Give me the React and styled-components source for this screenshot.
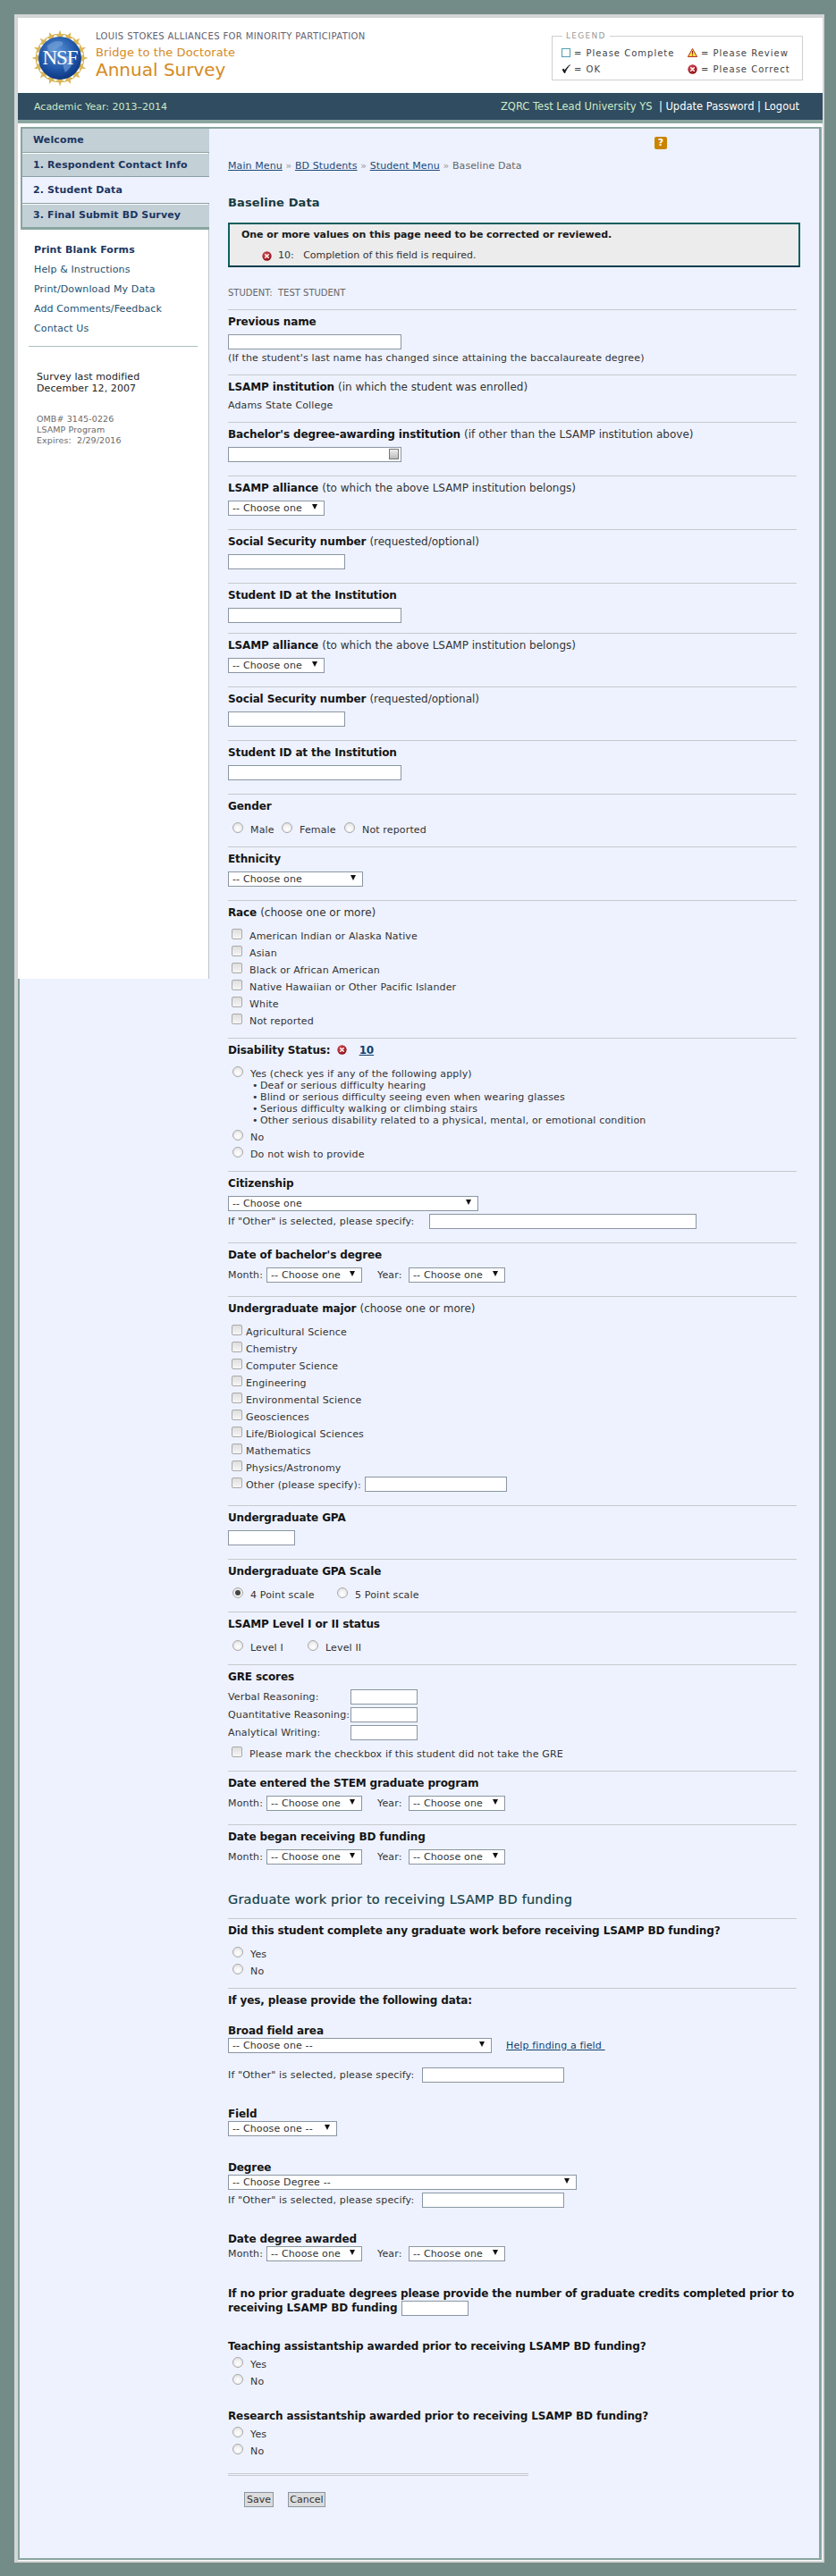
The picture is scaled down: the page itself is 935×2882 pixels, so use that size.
import React from 'react';
import styled, { createGlobalStyle } from 'styled-components';

const GlobalStyle = createGlobalStyle`
  html, body { margin: 0; padding: 0; background: #748c88; }
  body { font-family: "DejaVu Sans", Verdana, sans-serif; font-size: 11px; color: #222; }
`;

const Page = styled.div`
  width: 935px;
  height: 2882px;
  padding-top: 16px;
  box-sizing: border-box;
`;
const Wrapper = styled.div`
  width: 906px;
  height: 2851px;
  margin-left: 16px;
  box-sizing: border-box;
  background: #fff;
  border: 4px solid #d4d6d6;
  border-right-width: 2px;
  border-bottom-width: 2px;
`;

/* header */
const Header = styled.div`
  height: 84px;
  position: relative;
  display: flex;
`;
const Logo = styled.svg`
  width: 68px;
  height: 64px;
  margin: 13px 0 0 13px;
`;
const Titles = styled.div`
  margin: 14px 0 0 6px;
  width: 500px;
`;
const Over = styled.div`
  font-size: 10px;
  line-height: 14px;
  color: #5f6172;
  letter-spacing: 0.38px;
`;
const Sub = styled.div`
  font-size: 13px;
  line-height: 18px;
  margin-top: 2px;
  color: #d58a22;
  letter-spacing: 0.1px;
`;
const Big = styled.div`
  font-size: 20px;
  line-height: 22px;
  margin-top: -1px;
  color: #d58a22;
`;
const Legend = styled.fieldset`
  position: absolute;
  left: 597px;
  top: 16px;
  width: 281px;
  height: 54px;
  box-sizing: border-box;
  margin: 0;
  padding: 5px 0 0 10px;
  border: 1px solid #cfcfcf;
  display: grid;
  grid-template-columns: 141px 1fr;
  grid-auto-rows: 18px;
  align-items: center;
  font-size: 10px;
  letter-spacing: 1px;
  color: #444;
  & > legend {
    padding: 0 4px;
    margin-left: 1px;
    font-size: 9px;
    line-height: 9px;
    color: #999;
    letter-spacing: 1.3px;
  }
`;
const LegendItem = styled.div`
  display: flex;
  align-items: center;
  gap: 4px;
  white-space: nowrap;
`;
const LegendBox = styled.span`
  width: 8px;
  height: 8px;
  border: 1px solid #4f9fb3;
  background: #fff;
`;

const TopBar = styled.div`
  height: 34px;
  box-sizing: border-box;
  background: #304c60;
  border-bottom: 4px solid #8aa5a0;
  display: flex;
  justify-content: space-between;
  align-items: center;
  padding: 0 26px 0 18px;
  font-size: 11px;
  color: #cdeac8;
`;
const BarLinks = styled.div`
  white-space: pre;
  font-size: 11.5px;
  & b { font-weight: 400; color: #fff; }
`;

/* panel */
const Panel = styled.div`
  margin: 4px 1px 0 0;
  height: 2722px;
  box-sizing: border-box;
  background: #eef2fe;
  border: 2px solid #8aa5a0;
  border-right-width: 3px;
  display: flex;
  align-items: flex-start;
  position: relative;
`;
const Sidebar = styled.div`
  width: 214px;
  height: 953px;
  margin: -2px 0 0 -2px;
  padding-left: 5px;
  box-sizing: border-box;
  flex: none;
  background: #fff;
  border-right: 1px solid #b8c6c6;
  position: relative;
`;
const Nav = styled.div`
  margin: 0 -1px 0 -2px;
  border-top: 2px solid #8aa5a0;
  border-left: 2px solid #8aa5a0;
  border-bottom: 3px solid #8aa5a0;
`;
const NavItem = styled.div`
  height: ${(p) => p.$h}px;
  line-height: ${(p) => p.$h - 1}px;
  box-sizing: border-box;
  padding-left: 12px;
  background: ${(p) => (p.$active ? '#eef2fe' : '#c3d0d6')};
  border-bottom: 1px solid #8a9ea0;
  margin-bottom: ${(p) => p.$gap || 0}px;
  font-size: 11px;
  font-weight: 700;
  color: #1c3560;
  letter-spacing: 0.12px;
  &:last-child { border-bottom: 0; }
`;
const Links = styled.div`
  padding: 12px 0 0 13px;
`;
const SideLink = styled.div`
  height: 22px;
  line-height: 22px;
  font-size: 11px;
  letter-spacing: 0.12px;
  color: ${(p) => (p.$bold ? '#1c3560' : '#23506f')};
  font-weight: ${(p) => (p.$bold ? 700 : 400)};
`;
const SideRule = styled.div`
  height: 1px;
  margin: 8px 12px 0 7px;
  background: #a9bfbf;
`;
const Modified = styled.div`
  padding: 27px 0 0 16px;
  line-height: 13px;
  font-size: 11px;
  color: #222;
  letter-spacing: 0.1px;
`;
const Omb = styled.div`
  padding: 22px 0 0 16px;
  line-height: 12px;
  font-size: 9.5px;
  color: #6a6a6a;
  letter-spacing: 0.1px;
`;

/* content */
const Main = styled.div`
  width: 640px;
  margin-left: 21px;
  position: relative;
`;
const HelpIcon = styled.div`
  position: absolute;
  left: 477px;
  top: 9px;
  width: 14px;
  height: 14px;
  border-radius: 2px;
  background: #c98400;
  color: #fff;
  font-size: 11px;
  font-weight: 700;
  line-height: 14px;
  text-align: center;
`;
const Crumbs = styled.div`
  padding-top: 34px;
  line-height: 16px;
  color: #666;
  white-space: pre;
  letter-spacing: 0.1px;
  & a { color: #1d4a78; text-decoration: underline; }
  & span { color: #999; }
`;
const PageTitle = styled.h1`
  margin: 24px 0 0;
  font-size: 13px;
  line-height: 18px;
  font-weight: 700;
  color: #173c40;
  letter-spacing: 0.1px;
`;
const Alert = styled.div`
  margin-top: 13px;
  width: 640px;
  height: 50px;
  box-sizing: border-box;
  background: #ececec;
  border: 2px solid #0f5f5f;
  border-bottom-color: #0b3d4d;
  padding: 5px 0 0 13px;
`;
const AlertHead = styled.div`
  font-weight: 700;
  line-height: 14px;
  color: #1a1a1a;
  letter-spacing: -0.05px;
`;
const AlertLine = styled.div`
  margin: 9px 0 0 23px;
  line-height: 14px;
  display: flex;
  align-items: center;
  color: #333;
  white-space: pre;
`;
const Student = styled.div`
  margin-top: 22px;
  font-size: 10px;
  line-height: 14px;
  color: #666;
`;
const Section = styled.div`
  display: flow-root;
  width: 636px;
  height: ${(p) => p.$h}px;
  box-sizing: border-box;
  border-top: ${(p) => (p.$plain ? 0 : '1px solid #c6cacc')};
  padding-top: ${(p) => (p.$plain ? 0 : 5)}px;
  margin-top: ${(p) => p.$mt || 0}px;
`;
const Label = styled.div`
  height: ${(p) => p.$lines * 16 || 16}px;
  font-size: 12px;
  font-weight: 700;
  line-height: 16px;
  color: #151515;
  letter-spacing: -0.12px;
  white-space: nowrap;
  margin-top: ${(p) => p.$mt || 0}px;
  & span { font-weight: 400; color: #333; letter-spacing: 0; }
  & a { color: #123f6b; text-decoration: underline; margin-left: 10px; }
  & svg { margin-left: 3px; vertical-align: -1px; }
`;
const Input = styled.span`
  display: inline-block;
  width: ${(p) => p.$w}px;
  height: 17px;
  box-sizing: border-box;
  background: #fff;
  border: 1px solid #8a96a3;
  vertical-align: middle;
  margin-left: ${(p) => p.$ml || 0}px;
  margin-top: ${(p) => p.$mt || 0}px;
  position: relative;
`;
const Select = styled.span`
  display: inline-flex;
  align-items: center;
  justify-content: space-between;
  width: ${(p) => p.$w}px;
  height: 17px;
  box-sizing: border-box;
  background: #fff;
  border: 1px solid #8a96a3;
  padding: 0 7px 0 4px;
  font-size: 11px;
  letter-spacing: 0.15px;
  color: #333;
  &::after {
    content: '';
    border-left: 3px solid transparent;
    border-right: 3px solid transparent;
    border-top: 6px solid #111;
    margin-top: -3px;
  }
`;
const Control = styled.div`
  margin-top: ${(p) => (p.$mt === undefined ? 6 : p.$mt)}px;
  height: 17px;
  display: flex;
  align-items: center;
  white-space: pre;
  color: #333;
`;
const Text = styled.div`
  line-height: 14px;
  letter-spacing: 0.15px;
  color: #333;
  margin-top: ${(p) => p.$mt || 0}px;
`;
const FieldLabel = styled.span`
  flex: none;
  width: ${(p) => p.$w}px;
  margin-left: ${(p) => p.$ml || 0}px;
  letter-spacing: 0.15px;
  color: #333;
`;
const HelpLink = styled.a`
  margin-left: 16px;
  letter-spacing: 0.15px;
  color: #123f6b;
  text-decoration: underline;
`;
const Option = styled.div`
  height: 19px;
  display: flex;
  align-items: center;
  color: #333;
  letter-spacing: 0.15px;
  white-space: pre;
  padding-left: 4px;
  box-sizing: border-box;
  width: ${(p) => (p.$w ? `${p.$w}px` : 'auto')};
`;
const OptionText = styled.span`
  padding-top: 5px;
`;
const Options = styled.div`
  margin-top: 6px;
`;
const Row = styled.div`
  display: flex;
  margin-top: 6px;
`;
const RadioMark = styled.span`
  flex: none;
  width: 12px;
  height: 12px;
  box-sizing: border-box;
  border-radius: 50%;
  border: 1px solid #a9a9a9;
  background: radial-gradient(circle at 50% 65%, #fff 0%, #f2f2f2 45%, #d8d8d8 100%);
  margin: 0 8px 0 1px;
  position: relative;
  &::after {
    content: ${(p) => (p.$on ? "''" : 'none')};
    position: absolute;
    left: 2px;
    top: 2px;
    width: 6px;
    height: 6px;
    border-radius: 50%;
    background: #444;
  }
`;
const CheckMark = styled.span`
  flex: none;
  width: 12px;
  height: 12px;
  box-sizing: border-box;
  border-radius: 2px;
  border: 1px solid #a9a9a9;
  background: linear-gradient(#dedede, #f6f6f6);
  margin-right: ${(p) => p.$mr ?? 8}px;
`;
const Bullets = styled.ul`
  margin: 0;
  padding: 0 0 0 36px;
  list-style: none;
  & li { height: 13px; line-height: 13px; letter-spacing: 0.15px; color: #333; }
  & li::before { content: '•'; display: inline-block; width: 9px; margin-left: -9px; }
`;
const GreRow = styled.div`
  height: 17px;
  margin-bottom: 3px;
  display: flex;
  align-items: center;
  color: #333;
  letter-spacing: 0.15px;
  white-space: nowrap;
`;
const GreName = styled.span`
  width: 137px;
  flex: none;
`;
const Heading2 = styled.h2`
  margin: 25px 0 0;
  font-size: 14.5px;
  line-height: 18px;
  font-weight: 400;
  letter-spacing: 0.2px;
  color: #123f45;
  -webkit-text-stroke: 0.2px #123f45;
`;
const DoubleRule = styled.div`
  width: 336px;
  height: 3px;
  box-sizing: border-box;
  border-top: 1px solid #c6cacc;
  border-bottom: 1px solid #c6cacc;
  margin-top: 15px;
`;
const Buttons = styled.div`
  display: flex;
  gap: 16px;
  margin: 18px 0 0 18px;
`;
const Button = styled.button`
  width: ${(p) => p.$w}px;
  height: 17px;
  padding: 0;
  background: #dcdcdc;
  border: 1px solid #8a96a3;
  font-family: inherit;
  font-size: 11px;
  color: #333;
`;
const AddressIcon = styled.span`
  position: absolute;
  right: 2px;
  top: 1px;
  width: 11px;
  height: 12px;
  box-sizing: border-box;
  border: 1px solid #777;
  background: linear-gradient(#eee, #bbb);
`;

const Radio = ({ children, on, w }) => (
  <Option $w={w}>
    <RadioMark $on={on} />
    <OptionText>{children}</OptionText>
  </Option>
);
const Check = ({ children, mr }) => (
  <Option>
    <CheckMark $mr={mr} />
    <OptionText>{children}</OptionText>
  </Option>
);

const ErrorIcon = ({ size = 11 }) => (
  <svg width={size} height={size} viewBox="0 0 12 12">
    <defs>
      <radialGradient id="err" cx="40%" cy="35%" r="70%">
        <stop offset="0" stopColor="#e0505a" />
        <stop offset="1" stopColor="#8a0d14" />
      </radialGradient>
    </defs>
    <circle cx="6" cy="6" r="5.6" fill="url(#err)" />
    <path d="M4 4l4 4M8 4l-4 4" stroke="#fff" strokeWidth="1.5" strokeLinecap="round" />
  </svg>
);

const NsfLogo = () => {
  const stars = Array.from({ length: 16 }, (_, i) => (i * 360) / 16);
  return (
    <Logo viewBox="0 0 68 64">
      <defs>
        <radialGradient id="globe" cx="45%" cy="35%" r="70%">
          <stop offset="0" stopColor="#5c95d8" />
          <stop offset="0.6" stopColor="#1f56a8" />
          <stop offset="1" stopColor="#0b2f78" />
        </radialGradient>
      </defs>
      {stars.map((a) => (
        <g key={a} transform={`rotate(${a} 34 32)`}>
          <path d="M34 0.5l1.6 4.4 4.4.2-3.5 2.6 1.3 4.3-3.8-2.6-3.8 2.6 1.3-4.3-3.5-2.6 4.4-.2z" fill="#d9b658" />
        </g>
      ))}
      <circle cx="34" cy="32" r="24" fill="url(#globe)" />
      <path d="M20 18c6-5 12-6 17-4 2 2-2 5-5 6-2 3-5 3-7 6-3 0-5-2-5-8zM38 30c5-1 10 1 11 5-1 5-6 11-9 13-2-5-4-12-2-18z" fill="#7fa9dc" opacity="0.55" />
      <text x="34" y="39" textAnchor="middle" fontFamily='"Liberation Serif", serif' fontSize="23" fill="#fff" letterSpacing="-1">NSF</text>
    </Logo>
  );
};

const DateRow = ({ mt }) => (
  <Control $mt={mt}>
    <FieldLabel $w={43}>Month:</FieldLabel>
    <Select $w={107}>-- Choose one</Select>
    <FieldLabel $w={35} $ml={17}>Year:</FieldLabel>
    <Select $w={108}>-- Choose one</Select>
  </Control>
);

const races = ['American Indian or Alaska Native', 'Asian', 'Black or African American', 'Native Hawaiian or Other Pacific Islander', 'White', 'Not reported'];
const majors = ['Agricultural Science', 'Chemistry', 'Computer Science', 'Engineering', 'Environmental Science', 'Geosciences', 'Life/Biological Sciences', 'Mathematics', 'Physics/Astronomy'];

export default function App() {
  return (
    <Page>
      <GlobalStyle />
      <Wrapper>
        <Header>
          <NsfLogo />
          <Titles>
            <Over>LOUIS STOKES ALLIANCES FOR MINORITY PARTICIPATION</Over>
            <Sub>Bridge to the Doctorate</Sub>
            <Big>Annual Survey</Big>
          </Titles>
          <Legend>
            <legend>LEGEND</legend>
            <LegendItem><LegendBox /> = Please Complete</LegendItem>
            <LegendItem>
              <svg width="11" height="10" viewBox="0 0 11 10"><path d="M5.5 0.5L10.700 9.500H0.300z" fill="#f4dc3a" stroke="#b8322a" strokeWidth="1" /><path d="M5.500 3v3.500M5.500 7.500v1" stroke="#8a1a14" /></svg>
              = Please Review
            </LegendItem>
            <LegendItem>
              <svg width="10" height="11" viewBox="0 0 10 11"><path d="M1 6l2.600 4C5 6.500 7 3 9.600 0.600 6.800 2.500 4.800 4.800 3.600 7L2.400 5z" fill="#111" stroke="#111" strokeWidth="0.7" /></svg>
              = OK
            </LegendItem>
            <LegendItem><ErrorIcon /> = Please Correct</LegendItem>
          </Legend>
        </Header>
        <TopBar>
          <div>Academic Year: 2013–2014</div>
          <BarLinks>ZQRC Test Lead University YS  <b>| Update Password | Logout</b></BarLinks>
        </TopBar>
        <Panel>
          <Sidebar>
            <Nav>
              <NavItem $h={27} $gap={1}>Welcome</NavItem>
              <NavItem $h={26}>1. Respondent Contact Info</NavItem>
              <NavItem $h={30} $gap={1} $active>2. Student Data</NavItem>
              <NavItem $h={25}>3. Final Submit BD Survey</NavItem>
            </Nav>
            <Links>
              <SideLink $bold>Print Blank Forms</SideLink>
              <SideLink>Help &amp; Instructions</SideLink>
              <SideLink>Print/Download My Data</SideLink>
              <SideLink>Add Comments/Feedback</SideLink>
              <SideLink>Contact Us</SideLink>
            </Links>
            <SideRule />
            <Modified>Survey last modified<br />December 12, 2007</Modified>
            <Omb>OMB# 3145-0226<br />LSAMP Program<br />Expires:&nbsp; 2/29/2016</Omb>
          </Sidebar>
          <Main>
            <HelpIcon>?</HelpIcon>
            <Crumbs><a>Main Menu</a> <span>»</span> <a>BD Students</a> <span>»</span> <a>Student Menu</a> <span>»</span> Baseline Data</Crumbs>
            <PageTitle>Baseline Data</PageTitle>
            <Alert>
              <AlertHead>One or more values on this page need to be corrected or reviewed.</AlertHead>
              <AlertLine><ErrorIcon />  10:   Completion of this field is required.</AlertLine>
            </Alert>
            <Student>STUDENT:&nbsp; TEST STUDENT</Student>

            <Section $h={73} $mt={11}>
              <Label>Previous name</Label>
              <Control><Input $w={194} /></Control>
              <Text $mt={3}>(If the student's last name has changed since attaining the baccalaureate degree)</Text>
            </Section>
            <Section $h={53}>
              <Label>LSAMP institution <span>(in which the student was enrolled)</span></Label>
              <Text $mt={6}>Adams State College</Text>
            </Section>
            <Section $h={60}>
              <Label>Bachelor's degree-awarding institution <span>(if other than the LSAMP institution above)</span></Label>
              <Control><Input $w={194}><AddressIcon /></Input></Control>
            </Section>
            <Section $h={60}>
              <Label>LSAMP alliance <span>(to which the above LSAMP institution belongs)</span></Label>
              <Control><Select $w={108}>-- Choose one</Select></Control>
            </Section>
            <Section $h={60}>
              <Label>Social Security number <span>(requested/optional)</span></Label>
              <Control><Input $w={131} /></Control>
            </Section>
            <Section $h={56}>
              <Label>Student ID at the Institution</Label>
              <Control><Input $w={194} /></Control>
            </Section>
            <Section $h={60}>
              <Label>LSAMP alliance <span>(to which the above LSAMP institution belongs)</span></Label>
              <Control><Select $w={108}>-- Choose one</Select></Control>
            </Section>
            <Section $h={60}>
              <Label>Social Security number <span>(requested/optional)</span></Label>
              <Control><Input $w={131} /></Control>
            </Section>
            <Section $h={60}>
              <Label>Student ID at the Institution</Label>
              <Control><Input $w={194} /></Control>
            </Section>
            <Section $h={59}>
              <Label>Gender</Label>
              <Row>
                <Radio w={55}>Male</Radio>
                <Radio w={70}>Female</Radio>
                <Radio>Not reported</Radio>
              </Row>
            </Section>
            <Section $h={60}>
              <Label>Ethnicity</Label>
              <Control><Select $w={151}>-- Choose one</Select></Control>
            </Section>
            <Section $h={154}>
              <Label>Race <span>(choose one or more)</span></Label>
              <Options>
                {races.map((r) => <Check key={r}>{r}</Check>)}
              </Options>
            </Section>
            <Section $h={149}>
              <Label>Disability Status: <ErrorIcon /> <a>10</a></Label>
              <Options>
                <Radio>Yes (check yes if any of the following apply)</Radio>
                <Bullets>
                  <li>Deaf or serious difficulty hearing</li>
                  <li>Blind or serious difficulty seeing even when wearing glasses</li>
                  <li>Serious difficulty walking or climbing stairs</li>
                  <li>Other serious disability related to a physical, mental, or emotional condition</li>
                </Bullets>
                <Radio>No</Radio>
                <Radio>Do not wish to provide</Radio>
              </Options>
            </Section>
            <Section $h={80}>
              <Label>Citizenship</Label>
              <Control><Select $w={280}>-- Choose one</Select></Control>
              <Control $mt={3}><FieldLabel $w={225}>If "Other" is selected, please specify:</FieldLabel><Input $w={299} /></Control>
            </Section>
            <Section $h={60}>
              <Label>Date of bachelor's degree</Label>
              <DateRow />
            </Section>
            <Section $h={234}>
              <Label>Undergraduate major <span>(choose one or more)</span></Label>
              <Options>
                {majors.map((m) => <Check key={m} mr={4}>{m}</Check>)}
                <Option>
                  <CheckMark $mr={4} />
                  <OptionText>Other (please specify):</OptionText>
                  <Input $w={159} $ml={4} $mt={4} />
                </Option>
              </Options>
            </Section>
            <Section $h={60}>
              <Label>Undergraduate GPA</Label>
              <Control><Input $w={75} /></Control>
            </Section>
            <Section $h={59}>
              <Label>Undergraduate GPA Scale</Label>
              <Row>
                <Radio on w={117}>4 Point scale</Radio>
                <Radio>5 Point scale</Radio>
              </Row>
            </Section>
            <Section $h={59}>
              <Label>LSAMP Level I or II status</Label>
              <Row>
                <Radio w={84}>Level I</Radio>
                <Radio>Level II</Radio>
              </Row>
            </Section>
            <Section $h={119}>
              <Label>GRE scores</Label>
              <Options>
                <GreRow><GreName>Verbal Reasoning:</GreName><Input $w={75} /></GreRow>
                <GreRow><GreName>Quantitative Reasoning:</GreName><Input $w={75} /></GreRow>
                <GreRow><GreName>Analytical Writing:</GreName><Input $w={75} /></GreRow>
              </Options>
              <Check>Please mark the checkbox if this student did not take the GRE</Check>
            </Section>
            <Section $h={60}>
              <Label>Date entered the STEM graduate program</Label>
              <DateRow />
            </Section>
            <Section $h={50}>
              <Label>Date began receiving BD funding</Label>
              <DateRow />
            </Section>

            <Heading2>Graduate work prior to receiving LSAMP BD funding</Heading2>
            <Section $h={78} $mt={12}>
              <Label>Did this student complete any graduate work before receiving LSAMP BD funding?</Label>
              <Options>
                <Radio>Yes</Radio>
                <Radio>No</Radio>
              </Options>
            </Section>
            <Section $h={40}>
              <Label>If yes, please provide the following data:</Label>
            </Section>
            <Section $plain $h={88}>
              <Label>Broad field area</Label>
              <Control $mt={0}>
                <Select $w={295}>-- Choose one --</Select>
                <HelpLink>Help finding a field&nbsp;</HelpLink>
              </Control>
              <Control $mt={16}><FieldLabel $w={217}>If "Other" is selected, please specify:</FieldLabel><Input $w={159} /></Control>
            </Section>
            <Section $plain $h={60}>
              <Label $mt={5}>Field</Label>
              <Control $mt={0}><Select $w={122}>-- Choose one --</Select></Control>
            </Section>
            <Section $plain $h={80}>
              <Label $mt={5}>Degree</Label>
              <Control $mt={0}><Select $w={390}>-- Choose Degree --</Select></Control>
              <Control $mt={3}><FieldLabel $w={217}>If "Other" is selected, please specify:</FieldLabel><Input $w={159} /></Control>
            </Section>
            <Section $plain $h={66}>
              <Label $mt={5}>Date degree awarded</Label>
              <DateRow mt={0} />
            </Section>
            <Section $plain $h={59}>
              <Label $lines={2}>If no prior graduate degrees please provide the number of graduate credits completed prior to<br />receiving LSAMP BD funding <Input $w={75} /></Label>
            </Section>
            <Section $plain $h={78}>
              <Label>Teaching assistantship awarded prior to receiving LSAMP BD funding?</Label>
              <Radio>Yes</Radio>
              <Radio>No</Radio>
            </Section>
            <Section $plain $h={57}>
              <Label>Research assistantship awarded prior to receiving LSAMP BD funding?</Label>
              <Radio>Yes</Radio>
              <Radio>No</Radio>
            </Section>
            <DoubleRule />
            <Buttons>
              <Button $w={33}>Save</Button>
              <Button $w={42}>Cancel</Button>
            </Buttons>
          </Main>
        </Panel>
      </Wrapper>
    </Page>
  );
}
